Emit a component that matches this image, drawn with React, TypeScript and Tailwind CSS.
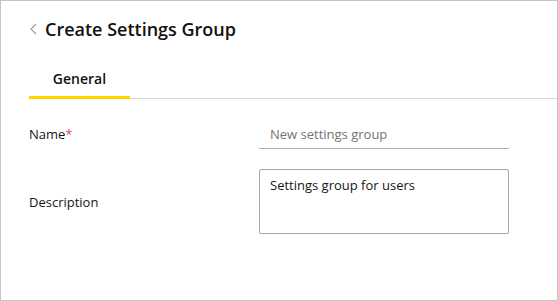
export default function App() {
  return (
    <div className="w-[558px] h-[301px] border border-[#c4c4c4] bg-white font-['Open_Sans',sans-serif] text-[#161616]">
      {/* Header */}
      <div className="flex items-center h-[59px] pl-[29px] pb-[3px]">
        <svg width="7" height="12" viewBox="0 0 7 12" className="shrink-0">
          <polyline points="6,1 1,6 6,11" fill="none" stroke="#9a9a9a" strokeWidth="1.1" />
        </svg>
        <h1 className="ml-[8px] text-[18px] font-semibold leading-none text-[#111]">Create Settings Group</h1>
      </div>

      {/* Tabs */}
      <div className="ml-[28px] border-b border-[#d6d6d6] flex">
        <div className="w-[101px] h-[39px] flex items-center justify-center border-b-[3px] border-[#ffd500] -mb-px">
          <span className="text-[14px] font-semibold text-[#111]">General</span>
        </div>
      </div>

      {/* Form */}
      <div className="pl-[28px] pt-[20px]">
        <div className="flex items-start">
          <label className="w-[230px] pt-[5px] text-[13px] leading-[20px]">
            Name<span className="text-[#e0484a]">*</span>
          </label>
          <div className="w-[250px] h-[30px] border-b border-[#b0b0b0] pl-[11px] pt-[5px] text-[13px] leading-[20px] text-[#737373]">
            New settings group
          </div>
        </div>
        <div className="flex items-center mt-[20px]">
          <label className="w-[230px] pt-[2px] text-[13px]">Description</label>
          <div className="w-[250px] h-[65px] border border-[#a8a8a8] rounded-[2px] px-[10px] pt-[5px] text-[13px] leading-[20px]">
            Settings group for users
          </div>
        </div>
      </div>
    </div>
  )
}
